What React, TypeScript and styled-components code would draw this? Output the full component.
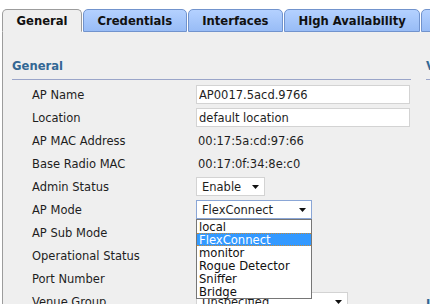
import React from "react"
import styled, { createGlobalStyle } from "styled-components"

const GlobalStyle = createGlobalStyle`
  html, body {
    margin: 0;
    padding: 0;
    background: #ffffff;
    overflow: hidden;
    height: 304px;
  }
  body {
    font-family: "DejaVu Sans", Verdana, sans-serif;
    font-size: 11.5px;
    color: #1e1e1e;
  }
`

const Page = styled.div`
  width: 640px;
  height: 304px;
  display: flex;
  flex-direction: column;
`

const TabBar = styled.div`
  display: flex;
  align-items: flex-end;
  gap: 1px;
  padding: 9px 0 0 2px;
`

const Tab = styled.div<{ $active?: boolean }>`
  box-sizing: border-box;
  height: 23px;
  padding: 0 13.5px;
  display: flex;
  align-items: center;
  white-space: nowrap;
  font-weight: bold;
  font-size: 11.6px;
  color: #111;
  border: 1px solid ${(p) => (p.$active ? "#9c9c9c" : "#7193cd")};
  border-bottom-color: ${(p) => (p.$active ? "#efefef" : "#7193cd")};
  border-radius: 5px 5px 0 0;
  background: ${(p) =>
    p.$active ? "#efefef" : "linear-gradient(#b4d1ff, #98bcf6)"};
`

const Panel = styled.div`
  flex: 1;
  margin-left: 2px;
  background: #efefef;
  border-left: 1px solid #9c9c9c;
  padding: 26px 0 0 9px;
  display: flex;
  gap: 15px;
`

const Column = styled.div<{ $width: number }>`
  width: ${(p) => p.$width}px;
  flex-shrink: 0;
`

const SectionHeading = styled.div<{ $spaced?: boolean }>`
  color: #336794;
  font-weight: bold;
  font-size: 11.6px;
  line-height: 16px;
  padding-bottom: 5px;
  border-bottom: 1px solid #9aa5c9;
  margin: ${(p) => (p.$spaced ? "6px" : "0")} 0 3px;
`

const Row = styled.div`
  display: grid;
  grid-template-columns: 164px 1fr;
  align-items: center;
  height: 23px;
  padding-left: 20px;
  white-space: nowrap;
`

const Label = styled.span``

const Value = styled.span`
  padding-left: 2px;
`

const TextInput = styled.input`
  box-sizing: border-box;
  width: 214px;
  height: 19px;
  margin: 0;
  padding: 0 2px;
  border: 1px solid #d3d3d3;
  background: #fff;
  font-family: "DejaVu Sans", Verdana, sans-serif;
  font-size: 11.5px;
  color: #1e1e1e;
  outline: none;
`

const SelectWrap = styled.div`
  position: relative;
  width: fit-content;
`

const SelectBox = styled.div<{ $width: number; $focused?: boolean }>`
  box-sizing: border-box;
  width: ${(p) => p.$width}px;
  height: 19px;
  padding: 0 5px;
  display: flex;
  align-items: center;
  justify-content: space-between;
  background: #fff;
  border: 1px solid ${(p) => (p.$focused ? "#8aa6d6" : "#d3d3d3")};
`

const Arrow = () => (
  <svg width="7" height="4" viewBox="0 0 7 4">
    <polygon points="0,0 7,0 3.5,4" fill="#111" />
  </svg>
)

const DropList = styled.div`
  position: absolute;
  top: 19px;
  left: 0;
  width: 116px;
  box-sizing: border-box;
  border: 1px solid #767676;
  background: #fff;
  z-index: 5;
`

const DropItem = styled.div<{ $selected?: boolean }>`
  box-sizing: border-box;
  height: 13px;
  line-height: 12px;
  padding: 0 2px;
  font-size: 11.6px;
  color: ${(p) => (p.$selected ? "#fff" : "#111")};
  background: ${(p) => (p.$selected ? "#3399ff" : "transparent")};
  border: 1px dotted ${(p) => (p.$selected ? "#c58a3a" : "transparent")};
  border-left: none;
  border-right: none;
  white-space: nowrap;
`

const Select = ({
  width,
  value,
  focused,
}: {
  width: number
  value: string
  focused?: boolean
}) => (
  <SelectBox $width={width} $focused={focused}>
    <span>{value}</span>
    <Arrow />
  </SelectBox>
)

const modes = ["local", "FlexConnect", "monitor", "Rogue Detector", "Sniffer", "Bridge"]

const tabs = ["General", "Credentials", "Interfaces", "High Availability", "Inventory", "Advanced"]

const versionRows = [
  "Primary Software Version",
  "Backup Software Version",
  "Predownload Status",
  "Predownloaded Version",
  "Predownload Next Retry Time",
  "Predownload Retry Count",
  "Boot Version",
  "IOS Version",
  "Mini IOS Version",
]

const App = () => {
  return (
    <Page>
      <GlobalStyle />
      <TabBar>
        {tabs.map((t, idx) => (
          <Tab key={t} $active={idx === 0}>
            {t}
          </Tab>
        ))}
      </TabBar>
      <Panel>
        <Column $width={399}>
          <SectionHeading>General</SectionHeading>
          <Row>
            <Label>AP Name</Label>
            <TextInput readOnly value="AP0017.5acd.9766" />
          </Row>
          <Row>
            <Label>Location</Label>
            <TextInput readOnly value="default location" />
          </Row>
          <Row>
            <Label>AP MAC Address</Label>
            <Value>00:17:5a:cd:97:66</Value>
          </Row>
          <Row>
            <Label>Base Radio MAC</Label>
            <Value>00:17:0f:34:8e:c0</Value>
          </Row>
          <Row>
            <Label>Admin Status</Label>
            <Select width={69} value="Enable" />
          </Row>
          <Row>
            <Label>AP Mode</Label>
            <SelectWrap>
              <Select width={116} value="FlexConnect" focused />
              <DropList>
                {modes.map((m) => (
                  <DropItem key={m} $selected={m === "FlexConnect"}>
                    {m}
                  </DropItem>
                ))}
              </DropList>
            </SelectWrap>
          </Row>
          <Row>
            <Label>AP Sub Mode</Label>
          </Row>
          <Row>
            <Label>Operational Status</Label>
          </Row>
          <Row>
            <Label>Port Number</Label>
          </Row>
          <Row>
            <Label>Venue Group</Label>
            <Select width={152} value="Unspecified" />
          </Row>
        </Column>
        <Column $width={300}>
          <SectionHeading>Versions</SectionHeading>
          {versionRows.map((r) => (
            <Row key={r}>
              <Label>{r}</Label>
              <Value>7.0.98.0</Value>
            </Row>
          ))}
          <SectionHeading $spaced>Inventory Information</SectionHeading>
        </Column>
      </Panel>
    </Page>
  )
}

export default App
